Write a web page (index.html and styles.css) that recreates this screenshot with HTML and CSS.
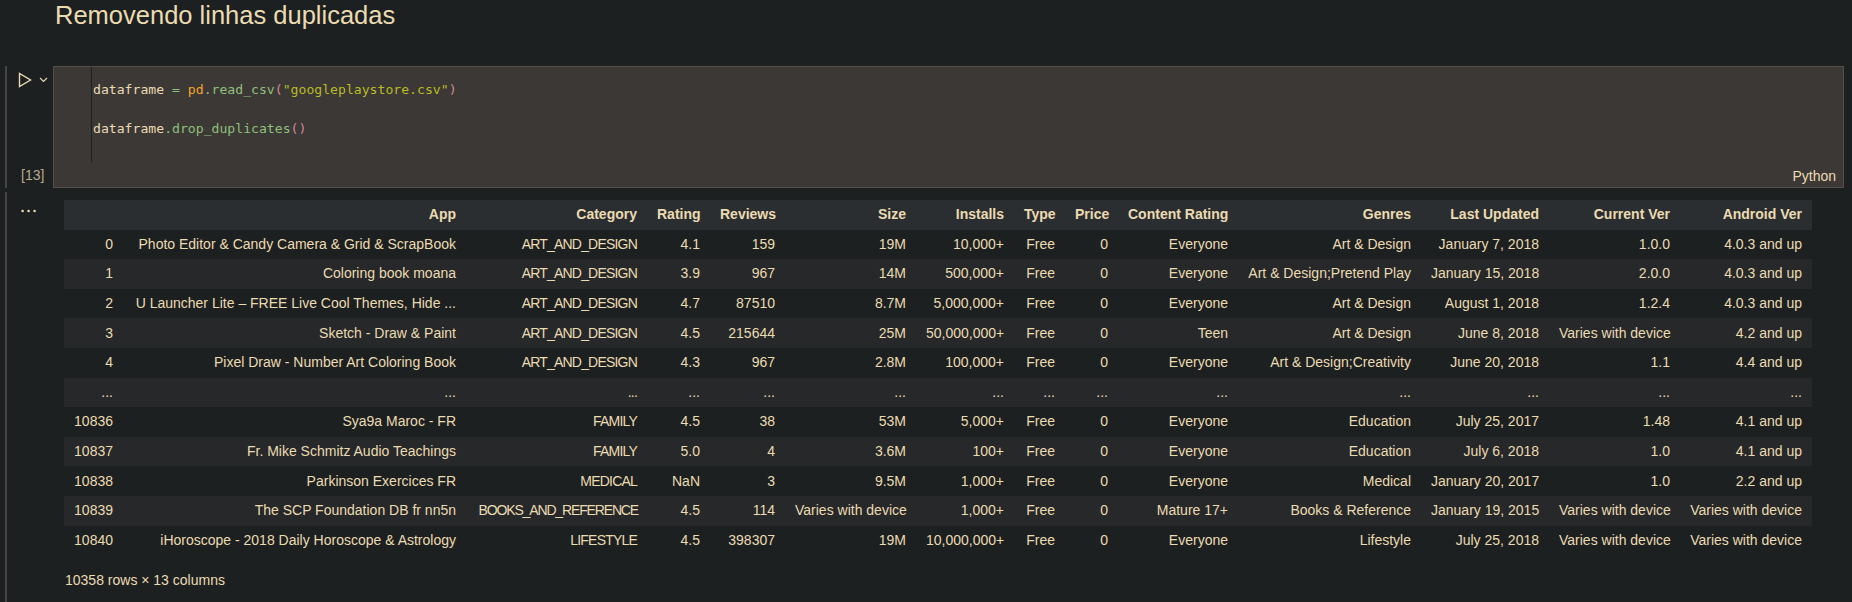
FILE: index.html
```html
<!DOCTYPE html>
<html lang="pt">
<head>
<meta charset="utf-8">
<title>Notebook</title>
<link rel="stylesheet" href="styles.css">
</head>
<body>
<div class="md-cell">
  <h1 class="title">Removendo linhas duplicadas</h1>
</div>

<div class="code-cell">
  <div class="gutter">
    <div class="run">
      <svg class="run-icon" width="14" height="16" viewBox="0 0 14 16"><polygon points="1.5,1.5 1.5,14.5 12.5,8" fill="none" stroke="#ebdbb2" stroke-width="1.4" stroke-linejoin="miter"/></svg>
      <svg class="chev" width="9" height="6" viewBox="0 0 9 6"><polyline points="1,1 4.5,4.5 8,1" fill="none" stroke="#ebdbb2" stroke-width="1.1"/></svg>
    </div>
    <div class="count">[13]</div>
  </div>
  <div class="editor">
    <div class="code"><span class="v">dataframe</span><span class="op"> = </span><span class="mod">pd</span><span class="fn">.read_csv</span><span class="pn">(</span><span class="str">"googleplaystore.csv"</span><span class="pn">)</span>

<span class="v">dataframe</span><span class="fn">.drop_duplicates</span><span class="pn">()</span></div>
    <div class="lang">Python</div>
  </div>
</div>

<div class="output">
  <div class="gutter out-gutter">
    <svg width="16" height="4" viewBox="0 0 16 4"><circle cx="1.6" cy="2" r="1.3" fill="#ebdbb2"/><circle cx="7.6" cy="2" r="1.3" fill="#ebdbb2"/><circle cx="13.6" cy="2" r="1.3" fill="#ebdbb2"/></svg>
  </div>
  <div class="result">
    <table class="df">
      <colgroup>
        <col class="c-idx"><col class="c-app"><col class="c-cat"><col class="c-rat"><col class="c-rev"><col class="c-size"><col class="c-inst"><col class="c-type"><col class="c-price"><col class="c-cr"><col class="c-gen"><col class="c-lu"><col class="c-cv"><col class="c-av">
      </colgroup>
      <thead>
        <tr><th></th><th>App</th><th>Category</th><th>Rating</th><th>Reviews</th><th>Size</th><th>Installs</th><th>Type</th><th>Price</th><th>Content Rating</th><th>Genres</th><th>Last Updated</th><th>Current Ver</th><th>Android Ver</th></tr>
      </thead>
      <tbody>
        <tr><td>0</td><td>Photo Editor &amp; Candy Camera &amp; Grid &amp; ScrapBook</td><td>ART_AND_DESIGN</td><td>4.1</td><td>159</td><td>19M</td><td>10,000+</td><td>Free</td><td>0</td><td>Everyone</td><td>Art &amp; Design</td><td>January 7, 2018</td><td>1.0.0</td><td>4.0.3 and up</td></tr>
        <tr><td>1</td><td>Coloring book moana</td><td>ART_AND_DESIGN</td><td>3.9</td><td>967</td><td>14M</td><td>500,000+</td><td>Free</td><td>0</td><td>Everyone</td><td>Art &amp; Design;Pretend Play</td><td>January 15, 2018</td><td>2.0.0</td><td>4.0.3 and up</td></tr>
        <tr><td>2</td><td>U Launcher Lite – FREE Live Cool Themes, Hide ...</td><td>ART_AND_DESIGN</td><td>4.7</td><td>87510</td><td>8.7M</td><td>5,000,000+</td><td>Free</td><td>0</td><td>Everyone</td><td>Art &amp; Design</td><td>August 1, 2018</td><td>1.2.4</td><td>4.0.3 and up</td></tr>
        <tr><td>3</td><td>Sketch - Draw &amp; Paint</td><td>ART_AND_DESIGN</td><td>4.5</td><td>215644</td><td>25M</td><td>50,000,000+</td><td>Free</td><td>0</td><td>Teen</td><td>Art &amp; Design</td><td>June 8, 2018</td><td>Varies with device</td><td>4.2 and up</td></tr>
        <tr><td>4</td><td>Pixel Draw - Number Art Coloring Book</td><td>ART_AND_DESIGN</td><td>4.3</td><td>967</td><td>2.8M</td><td>100,000+</td><td>Free</td><td>0</td><td>Everyone</td><td>Art &amp; Design;Creativity</td><td>June 20, 2018</td><td>1.1</td><td>4.4 and up</td></tr>
        <tr class="ell"><td>...</td><td>...</td><td>...</td><td>...</td><td>...</td><td>...</td><td>...</td><td>...</td><td>...</td><td>...</td><td>...</td><td>...</td><td>...</td><td>...</td></tr>
        <tr><td>10836</td><td>Sya9a Maroc - FR</td><td>FAMILY</td><td>4.5</td><td>38</td><td>53M</td><td>5,000+</td><td>Free</td><td>0</td><td>Everyone</td><td>Education</td><td>July 25, 2017</td><td>1.48</td><td>4.1 and up</td></tr>
        <tr><td>10837</td><td>Fr. Mike Schmitz Audio Teachings</td><td>FAMILY</td><td>5.0</td><td>4</td><td>3.6M</td><td>100+</td><td>Free</td><td>0</td><td>Everyone</td><td>Education</td><td>July 6, 2018</td><td>1.0</td><td>4.1 and up</td></tr>
        <tr><td>10838</td><td>Parkinson Exercices FR</td><td>MEDICAL</td><td>NaN</td><td>3</td><td>9.5M</td><td>1,000+</td><td>Free</td><td>0</td><td>Everyone</td><td>Medical</td><td>January 20, 2017</td><td>1.0</td><td>2.2 and up</td></tr>
        <tr><td>10839</td><td>The SCP Foundation DB fr nn5n</td><td class="tight">BOOKS_AND_REFERENCE</td><td>4.5</td><td>114</td><td>Varies with device</td><td>1,000+</td><td>Free</td><td>0</td><td>Mature 17+</td><td>Books &amp; Reference</td><td>January 19, 2015</td><td>Varies with device</td><td>Varies with device</td></tr>
        <tr><td>10840</td><td>iHoroscope - 2018 Daily Horoscope &amp; Astrology</td><td>LIFESTYLE</td><td>4.5</td><td>398307</td><td>19M</td><td>10,000,000+</td><td>Free</td><td>0</td><td>Everyone</td><td>Lifestyle</td><td>July 25, 2018</td><td>Varies with device</td><td>Varies with device</td></tr>
      </tbody>
    </table>
    <div class="shape">10358 rows × 13 columns</div>
  </div>
</div>
</body>
</html>
```
FILE: styles.css
```css
* { box-sizing: border-box; }

html, body {
  margin: 0;
  height: 602px;
  overflow: hidden;
}

body {
  background: #1d2021;
  color: #ebdbb2;
  font-family: "Liberation Sans", Arial, sans-serif;
  font-size: 14px;
}

/* markdown cell */
.md-cell {
  height: 66px;
}

.title {
  margin: 0;
  padding: 0 0 0 55px;
  font-size: 25.5px;
  font-weight: 400;
  line-height: 30px;
  color: #ebdbb2;
}

/* code cell */
.code-cell {
  display: flex;
  height: 122px;
}

.gutter {
  margin-left: 5px;
  width: 48px;
  border-left: 2px solid #4a4440;
  display: flex;
  flex-direction: column;
  justify-content: space-between;
  flex-shrink: 0;
}

.run {
  display: flex;
  align-items: center;
  gap: 7px;
  padding: 6px 0 0 11px;
}

.run-icon, .chev { display: block; }

.count {
  padding: 0 0 5px 14px;
  line-height: 16px;
  font-size: 14px;
  color: #b9ab8e;
}

.editor {
  flex: 1;
  margin-right: 8px;
  background: #3c3836;
  border: 1px solid #564e48;
  display: flex;
  flex-direction: column;
}

.code {
  margin-left: 37px;
  height: 95px;
  border-left: 1px solid #1d2021;
  padding: 13px 0 0 1px;
  font-family: "DejaVu Sans Mono", monospace;
  font-size: 13.14px;
  line-height: 19.5px;
  white-space: pre;
  color: #ebdbb2;
}

.op { color: #8ec07c; }
.mod { color: #f4a62a; }
.fn { color: #8ec07c; }
.pn { color: #d3869b; }
.str { color: #b8bb26; }

.lang {
  margin-top: 6px;
  padding-right: 7px;
  text-align: right;
  line-height: 16px;
  font-size: 14px;
}

/* output */
.output {
  display: flex;
  margin-top: 4px;
  height: 410px;
}

.out-gutter {
  width: 59px;
  display: block;
  padding: 17px 0 0 14px;
}

.out-gutter svg { display: block; }

.result {
  padding-top: 8px;
}

.df {
  width: 1748px;
  table-layout: fixed;
  border-collapse: collapse;
  border-spacing: 0;
}

.df th, .df td {
  height: 29.6px;
  padding: 0 10px;
  text-align: right;
  white-space: nowrap;
  line-height: 17px;
  vertical-align: middle;
  overflow: visible;
}

.df td:nth-child(3) {
  letter-spacing: -0.8px;
}

.df td.tight {
  letter-spacing: -1.15px;
  padding-right: 9px;
}

.df th {
  font-weight: 700;
  background: #2b2e30;
}

.df tbody tr:nth-child(even) {
  background: #262829;
}

.c-idx { width: 59px; }
.c-app { width: 343px; }
.c-cat { width: 181px; }
.c-rat { width: 63px; }
.c-rev { width: 75px; }
.c-size { width: 131px; }
.c-inst { width: 98px; }
.c-type { width: 51px; }
.c-price { width: 53px; }
.c-cr { width: 120px; }
.c-gen { width: 183px; }
.c-lu { width: 128px; }
.c-cv { width: 131px; }
.c-av { width: 132px; }

.shape {
  margin-top: 17px;
  padding-left: 1px;
  line-height: 17px;
}
```
